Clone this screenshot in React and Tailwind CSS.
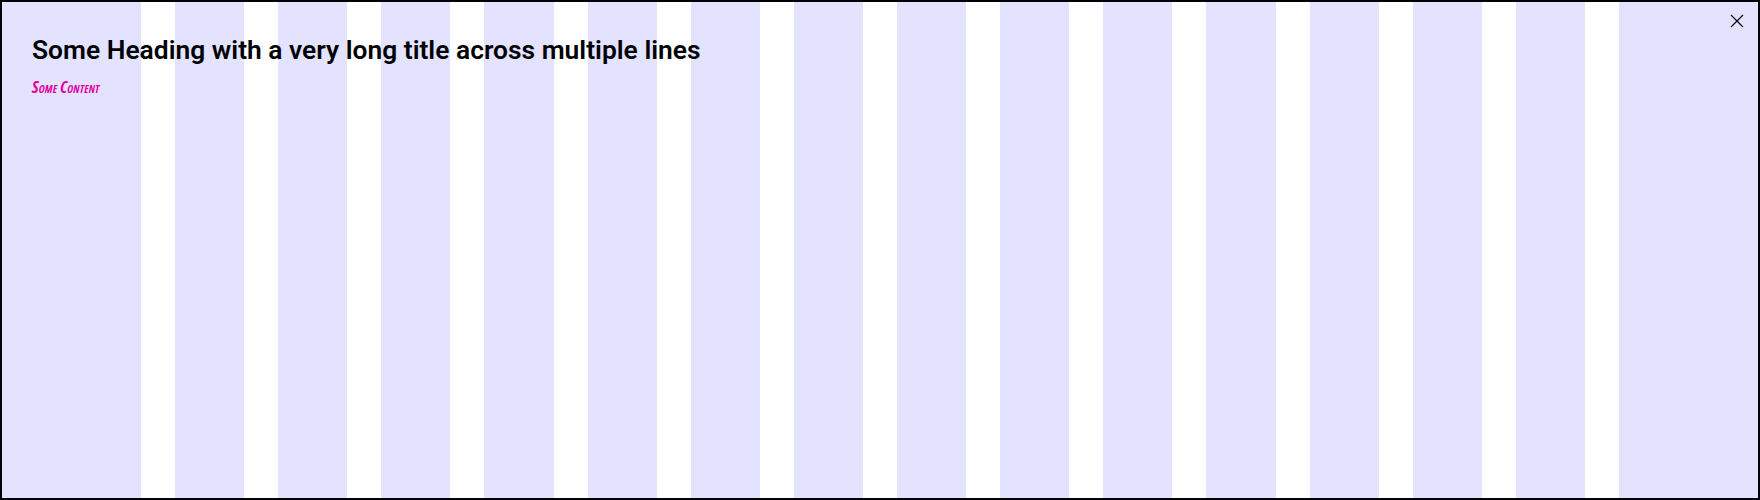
export default function App() {
  const cols = Array.from({ length: 16 });
  return (
    <div className="w-[1760px] h-[500px] bg-white">
      <div className="relative h-full border-2 border-[#010205] font-['Roboto',sans-serif] text-[#010205]">
        <div className="absolute inset-0 grid grid-cols-[139px_repeat(14,minmax(0,1fr))_139px] gap-x-[34px]">
          {cols.map((_, i) => (
            <div key={i} className="bg-[#e3e3ff]" />
          ))}
        </div>
        <div className="relative flex items-start justify-between pl-[30px] pr-[8px] pt-[31px]">
          <div className="flex flex-col">
            <h2 className="text-[26.4px] leading-[34px] font-semibold">
              Some Heading with a very long title across multiple lines
            </h2>
            <p className="mt-[10px] font-['Open_Sans',sans-serif] [font-stretch:75%] text-[16px] leading-[20px] font-bold italic text-[#e3009f] [font-variant:small-caps] tracking-[0.2px]">
              Some Content
            </p>
          </div>
          <button className="mt-[-25px] p-[6px]">
            <svg width="14" height="14" viewBox="0 0 14 14" fill="none" stroke="#010205" strokeWidth="1.2">
              <path d="M1 1 L13 13 M13 1 L1 13" />
            </svg>
          </button>
        </div>
      </div>
    </div>
  );
}
